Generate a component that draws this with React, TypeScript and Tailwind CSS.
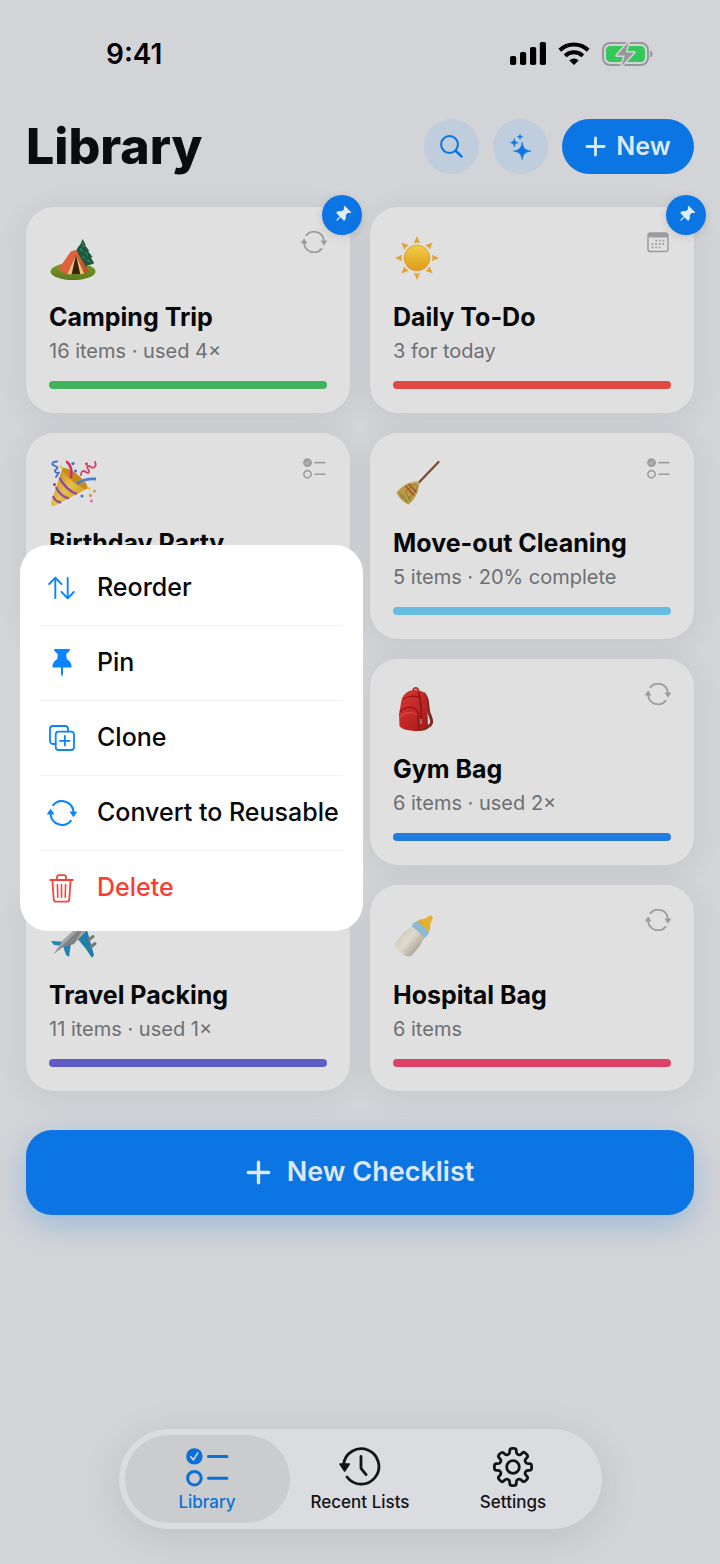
import React from 'react';

type IconProps = { className?: string };
type Kind = 'reusable' | 'daily' | 'checklist';

interface Checklist {
  title: string;
  detail: string;
  bar: string;
  kind: Kind;
  art: React.ReactNode;
  pinned?: boolean;
  menuOpen?: boolean;
}

/* ---------- icons ---------- */

const CycleIcon = ({ className }: IconProps) => (
  <svg className={className} viewBox="0 1 26 22" fill="none" aria-hidden="true">
    <path d="M5.4 5.2A10 10 0 0 1 22.9 10.5M3.100 13.5a10 10 0 0 0 17.500 5.300" stroke="currentColor" strokeWidth="1.8" strokeLinecap="round" />
    <path d="M20.3 10.6h5.2c.5 0 .6.4.4.7l-2.500 3.8c-.3.4-.7.4-1 0l-2.500-3.8c-.2-.3-.1-.7.4-.7ZM5.700 13.4H.5c-.5 0-.6-.4-.4-.7l2.500-3.800c.3-.4.7-.4 1 0l2.500 3.800c.2.3.1.7-.4.7Z" fill="currentColor" />
  </svg>
);

const ChecklistIcon = ({ className }: IconProps) => (
  <svg className={className} viewBox="0 0 43 39" fill="none" stroke="currentColor" strokeWidth="3" strokeLinecap="round" aria-hidden="true">
    <circle cx="8.4" cy="8.4" r="8.2" fill="currentColor" stroke="none" />
    <path d="m4.8 8.8 2.6 3.1 4.4-7" stroke="#d0d1d3" strokeWidth="1.7" strokeLinejoin="round" />
    <circle cx="8.4" cy="30.2" r="6.8" />
    <path d="M22.5 8.6h18.4M22.5 30.2h18.4" />
  </svg>
);

const CalendarIcon = ({ className }: IconProps) => (
  <svg className={className} viewBox="0 0 22 21" fill="none" aria-hidden="true">
    <rect x="1" y="1" width="20" height="18.6" rx="2.6" stroke="currentColor" strokeWidth="1.5" />
    <path d="M1 5.6V3.4C1 2 2 1 3.4 1h15.2C20 1 21 2 21 3.4v2.2Z" fill="currentColor" />
    <path d="M8.4 8.6h9.4M4.6 12h13.2M4.6 15.4h10" stroke="currentColor" strokeWidth="1.8" strokeDasharray="1.7 1.9" />
  </svg>
);

const PinIcon = ({ className }: IconProps) => (
  <svg className={className} viewBox="0 0 20 28" fill="currentColor" aria-hidden="true">
    <path d="M3 0h14c.8 0 1 .6.8 1.2-.4 1.8-3.3 2.8-3.6 4.3l.6 4.5c2.7 1.5 4.8 4.5 4.8 7.3 0 .8-.5 1.2-1.2 1.2h-7.4v6.6L10 28l-1-2.9v-6.6H1.6c-.7 0-1.2-.4-1.2-1.2 0-2.8 2.1-5.8 4.8-7.3l.6-4.5C5.5 4 2.6 3 2.2 1.2 2 .6 2.2 0 3 0Z" />
  </svg>
);

const SortIcon = ({ className }: IconProps) => (
  <svg className={className} viewBox="0 0 27 24" fill="none" stroke="currentColor" strokeWidth="1.9" strokeLinecap="round" strokeLinejoin="round" aria-hidden="true">
    <path d="M7.3 22V1.8M1.2 8l6.1-6.3L13.4 8M19.7 2v20.2M13.6 16l6.1 6.3 6.1-6.3" />
  </svg>
);

const CloneIcon = ({ className }: IconProps) => (
  <svg className={className} viewBox="0 0 26 26" fill="none" stroke="currentColor" strokeWidth="1.8" strokeLinecap="round" aria-hidden="true">
    <path d="M6.6 19H4a3 3 0 0 1-3-3V4a3 3 0 0 1 3-3h12a3 3 0 0 1 3 3v2.6" />
    <rect x="6.7" y="6.7" width="18.3" height="18.3" rx="3" />
    <path d="M15.9 11v9.600M11 15.900h9.700" />
  </svg>
);

const TrashIcon = ({ className }: IconProps) => (
  <svg className={className} viewBox="0 0 25 29" fill="none" stroke="currentColor" strokeWidth="1.8" strokeLinecap="round" strokeLinejoin="round" aria-hidden="true">
    <path d="M1.2 6h22.600M8 6V3.200C8 2 8.800 1.200 10 1.200h5c1.200 0 2 .8 2 2V6M3.400 6l1.300 19.200c.1 1.600 1 2.500 2.600 2.500h10.400c1.600 0 2.500-.9 2.600-2.500L21.600 6" />
    <path d="m8.400 10.500.4 12.700M12.500 10.500v12.700M16.600 10.500l-.4 12.700" strokeWidth="1.6" />
  </svg>
);

const SearchIcon = ({ className }: IconProps) => (
  <svg className={className} viewBox="0 0 23 23" fill="none" stroke="currentColor" strokeLinecap="round" aria-hidden="true">
    <circle cx="9.5" cy="9.5" r="8.4" strokeWidth="2" />
    <path d="m15.8 15.8 5.600 5.600" strokeWidth="2.6" />
  </svg>
);

const SparklesIcon = ({ className }: IconProps) => (
  <svg className={className} viewBox="0 0 22 26" fill="currentColor" stroke="currentColor" strokeWidth=".6" strokeLinejoin="round" aria-hidden="true">
    <path d="M12.2 8.200c.9 5.800 2.600 7.800 8.800 8.900-6.200 1-7.900 3-8.800 8.700-.9-5.700-2.600-7.700-8.800-8.700 6.200-1.100 7.900-3.100 8.800-8.900Z" />
    <path d="M4.300 4.400c.5 2.900 1.200 3.600 4.100 4.200-2.900.5-3.600 1.300-4.100 4.200C3.800 9.900 3.100 9.100.3 8.600 3.100 8 3.800 7.300 4.300 4.400Z" />
    <path d="M10 .2c.3 1.800.8 2.300 2.700 2.600C10.800 3.100 10.300 3.600 10 5.400 9.700 3.600 9.200 3.100 7.300 2.800 9.200 2.500 9.700 2 10 .2Z" />
  </svg>
);

const PlusIcon = ({ className }: IconProps) => (
  <svg className={className} viewBox="0 0 22 22" fill="none" stroke="currentColor" strokeWidth="3" strokeLinecap="round" aria-hidden="true">
    <path d="M11 2v18M2 11h18" />
  </svg>
);

const HistoryIcon = ({ className }: IconProps) => (
  <svg className={className} viewBox="0 0 42 40" fill="none" aria-hidden="true">
    <path d="M4.600 17.500A17.700 17.700 0 1 1 8 30M22 9.500v11.200c0 .5.1.9.4 1.300l4.600 5.600" stroke="currentColor" strokeWidth="2.8" strokeLinecap="round" />
    <path d="M1.200 16.300h8.900c.9 0 1.200.7.7 1.400l-4.300 6.500c-.5.7-1.200.7-1.700 0L.5 17.700c-.5-.7-.2-1.400.7-1.400Z" fill="currentColor" />
  </svg>
);

// eight teeth, corners softened with quadratic curves
const gearPath = (() => {
  const pts: [number, number][] = [];
  for (let i = 0; i < 8; i++) {
    for (const [offset, r] of [[-14, 13.6], [-10, 18.9], [10, 18.9], [14, 13.6]]) {
      const a = ((i * 45 + offset) * Math.PI) / 180;
      pts.push([Math.cos(a) * r, Math.sin(a) * r]);
    }
  }
  const mid = (a: [number, number], b: [number, number], t: number) =>
    `${(a[0] + (b[0] - a[0]) * t).toFixed(2)} ${(a[1] + (b[1] - a[1]) * t).toFixed(2)}`;
  return (
    pts
      .map((p, i) => {
        const prev = pts[(i + pts.length - 1) % pts.length];
        const next = pts[(i + 1) % pts.length];
        return `${i ? 'L' : 'M'}${mid(p, prev, 0.4)}Q${p[0].toFixed(2)} ${p[1].toFixed(2)} ${mid(p, next, 0.4)}`;
      })
      .join('') + 'Z'
  );
})();

const GearIcon = ({ className }: IconProps) => (
  <svg className={className} viewBox="-21 -21 42 42" fill="none" stroke="currentColor" strokeWidth="2.8" strokeLinejoin="round" aria-hidden="true">
    <path d={gearPath} />
    <circle r="6.3" />
  </svg>
);

const SignalIcon = ({ className }: IconProps) => (
  <svg className={className} viewBox="0 0 36 23" fill="currentColor" aria-hidden="true">
    <rect x="0" y="14" width="6.2" height="9" rx="1.8" />
    <rect x="10" y="10" width="6.2" height="13" rx="1.8" />
    <rect x="20" y="5" width="6.2" height="18" rx="1.8" />
    <rect x="29.8" y="0" width="6.2" height="23" rx="1.8" />
  </svg>
);

const WifiIcon = ({ className }: IconProps) => (
  <svg className={className} viewBox="0 0 32 23" fill="none" stroke="currentColor" strokeWidth="4" aria-hidden="true">
    <path d="M1.800 8.300a20.300 20.300 0 0 1 28.400 0" />
    <path d="M7.200 13.900a12.600 12.600 0 0 1 17.600 0" />
    <path d="M16 23l-4.700-4.600a6.700 6.700 0 0 1 9.400 0Z" fill="currentColor" stroke="none" />
  </svg>
);

const BatteryIcon = ({ className }: IconProps) => (
  <svg className={className} viewBox="0 0 51 26" aria-hidden="true">
    <rect x="1" y="2" width="45" height="22" rx="7" fill="none" stroke="#97989b" strokeWidth="2" />
    <rect x="4" y="5" width="39" height="16" rx="4.5" fill="#34c759" />
    <path d="M48 9.500c3.400 1 3.400 6 0 7Z" fill="#97989b" />
    <path d="M26.500 1 14.800 14.600h8L19.500 25 32 11.400h-8.200Z" fill="#97989b" stroke="#d3d4d7" strokeWidth="3" strokeLinejoin="round" paintOrder="stroke" />
  </svg>
);

/* ---------- checklist art ---------- */

const art = 'size-[48px]';

const Tent = (
  <svg className={art} viewBox="0 0 48 48" aria-hidden="true">
    <defs>
      <linearGradient id="grass" x1="0" y1="0" x2="0" y2="1">
        <stop offset="0" stopColor="#7d9a2b" />
        <stop offset="1" stopColor="#5b7a1c" />
      </linearGradient>
      <linearGradient id="canvas" x1="0" y1="0" x2="1" y2="1">
        <stop offset="0" stopColor="#e8764a" />
        <stop offset="1" stopColor="#c9442a" />
      </linearGradient>
    </defs>
    <ellipse cx="24" cy="37.5" rx="22.5" ry="8.6" fill="url(#grass)" />
    <path d="M35 28h2.600v6H35Z" fill="#5c3d22" />
    <path d="m33.500 5 3.400 6-1 .3 4.400 5.400-1.300.4 4.600 6-1.700.4 3.300 5.800c-4 2.300-9 2.300-13 1l-5-13.600 1.600-3.200 2.700-3.200Z" fill="#1c5a3e" />
    <path d="m33.500 9 1.300 4m-3.300 2 2 2m3 1 2 3m-5 2 3 1m2 2 3 2" stroke="#3f8862" strokeWidth="1.1" strokeLinecap="round" />
    <path d="m27 16 12.500 21.500-7.300 2.500L27 22.500l-9 18L9.500 35.500 22 17.500Z" fill="url(#canvas)" />
    <path d="M22 17.500 9.500 35.500l8.500 5L27 16Z" fill="#e0603c" />
    <path d="M27 21 18 40.300l17.300-.5Z" fill="#3b2014" />
    <path d="M27 21 18 40.300l4.500.2ZM27 21l8.300 18.800-4 .5Z" fill="#ecc47c" />
  </svg>
);

const Sun = (
  <svg className={art} viewBox="-24 -24 48 48" aria-hidden="true">
    <defs>
      <linearGradient id="sun" x1="0" y1="0" x2="0" y2="1">
        <stop offset="0" stopColor="#f0cf45" />
        <stop offset="1" stopColor="#e09a1c" />
      </linearGradient>
    </defs>
    {[0, 45, 90, 135, 180, 225, 270, 315].map((a) => (
      <path key={a} d="M-3.200-14.800 0-22 3.200-14.800Q0-16.200-3.200-14.800Z" fill="#e2a430" transform={`rotate(${a})`} />
    ))}
    <circle r="12.8" fill="url(#sun)" stroke="#d38d1c" strokeWidth=".7" />
  </svg>
);

const Party = (
  <svg className={art} viewBox="0 0 48 48" aria-hidden="true">
    <defs>
      <linearGradient id="cone" x1="0" y1="0" x2="1" y2="1">
        <stop offset="0" stopColor="#b98418" />
        <stop offset=".5" stopColor="#e6bf46" />
        <stop offset="1" stopColor="#c0871c" />
      </linearGradient>
    </defs>
    <path d="M13.500 8C18 7 38 22 38.500 28.500L6 45.500c-2.500 1-4.500 0-4-2.500Z" fill="url(#cone)" />
    <path d="M13.500 8C20 6 40 22 38.500 28.500 35 32 12 14 13.500 8Z" fill="#c68b1b" />
    <path d="M10.500 17.500C14 25 21 32 28 34M7 27c2 5 7 10 13 11.500M4 36c1 3 4 6 8 6.500" fill="none" stroke="#8b4aa5" strokeWidth="2.3" />
    <path d="M18 2c5 4 5 9 4 15" fill="none" stroke="#cc3358" strokeWidth="2.6" strokeLinecap="round" />
    <path d="M28 23.500c6-4 12-5 19-4.500" fill="none" stroke="#4a7fcf" strokeWidth="2.8" />
    <path d="M8 1.500c-5 0-6 3-3 4s5 2 2 4 1 4 3 3M9 14l-2 3" fill="none" stroke="#3d6ec4" strokeWidth="1.8" strokeLinecap="round" />
    <path d="M46 2c2 4-1 7-4 5s-5-1-3 2 1 5-2 3-5-1-5 3" fill="none" stroke="#cf4368" strokeWidth="1.8" strokeLinecap="round" />
    <circle cx="24" cy="3.5" r="1.6" fill="#3d6ec4" />
    <circle cx="26.5" cy="11" r="1.5" fill="#3d6ec4" />
    <circle cx="37.5" cy="4" r="1.4" fill="#cc3358" />
    <circle cx="5.5" cy="24.5" r="1.5" fill="#cc3358" />
    <circle cx="12" cy="7" r="1.4" fill="#e2c648" />
    <circle cx="40.5" cy="28.5" r="1.5" fill="#e2c648" />
    <circle cx="45.5" cy="31" r="1.5" fill="#d79b45" />
    <circle cx="41.5" cy="35.5" r="1.6" fill="#d7933d" />
    <circle cx="33" cy="36" r="1.5" fill="#3d6ec4" />
    <circle cx="42.5" cy="41" r="1.6" fill="#cf7ab2" />
  </svg>
);

const Broom = (
  <svg className={art} viewBox="0 0 48 48" aria-hidden="true">
    <path d="M45.500 2 24 24.500" stroke="#7b4a2c" strokeWidth="2.3" strokeLinecap="round" />
    <path d="M22 22c1.500.4 3.500 1.500 3.600 3 .2 7-4 14.500-10 19.500C11 43 6 38 3.500 32.500 9 26 16 22 22 22Z" fill="#b99a45" />
    <path d="m9 34 5 8M6.500 33.500l3 5M12.500 32l4.500 8M24 23c-4 2-8 5-11 9M25 25c-2 5-5 9-9 13" fill="none" stroke="#8e7230" strokeWidth="1" strokeLinecap="round" />
    <path d="m12.500 26 8.500 9.500M15.500 24l8 8.500" stroke="#a0532f" strokeWidth="1.6" />
    <path d="M20 22.500c3-1.500 5-.5 5.900 2" fill="none" stroke="#d2b765" strokeWidth="2" />
  </svg>
);

const Backpack = (
  <svg className={art} viewBox="0 0 48 48" aria-hidden="true">
    <defs>
      <linearGradient id="bag" x1="0" y1="0" x2="1" y2="1">
        <stop offset="0" stopColor="#dc3934" />
        <stop offset="1" stopColor="#a81519" />
      </linearGradient>
    </defs>
    <path d="M30 7c6 4 4 14 6 20 2 5 4 8 2 11s-5 4-8 5" fill="none" stroke="#7c2a1e" strokeWidth="3" />
    <path d="M20 5c0-4 5-4 5.500 0" fill="none" stroke="#b03528" strokeWidth="1.8" />
    <path d="M8 17C9 8 15 4 22 4c8 0 12 4 12 12l1 24c-1 4-7 5-13 5-7-.5-13-1.500-15.500-5L6 28Z" fill="url(#bag)" />
    <path d="M7 26c5-6 16-7 18 1l1 17M10 13c5-3 12-4 17-1" fill="none" stroke="#8d1216" strokeWidth="1.2" />
    <path d="M25 6c4 7 3 20 3 28" fill="none" stroke="#74151a" strokeWidth="1.3" />
    <path d="M7 31c5-5 12-6 17-2" fill="none" stroke="#d94a40" strokeWidth="1.2" />
    <path d="M28 33v5" stroke="#8c7772" strokeWidth="2" />
    <path d="M24 44c5 0 9-1 11-3" fill="none" stroke="#76331d" strokeWidth="2" />
  </svg>
);

const Plane = (
  <svg className={art} viewBox="0 0 48 48" aria-hidden="true">
    <path d="M19 30 2 29l3 4 9 1 3 9 3 2 2-14Z" fill="#1f86b4" />
    <path d="m27 25 11-7 7 25-2 3-6-9Z" fill="#207fa9" />
    <path d="m26 14-23-2 3-4 26 2Z" fill="#1f86b4" />
    <path d="M4.500 42 14 28 36 8c4-4 9-5 10-4s0 6-4 10L25 32 14 34Z" fill="#a3a4a5" />
    <path d="M4.500 42 16 31l22-21-13 22-11 3Z" fill="#7f8184" />
    <path d="m40 27.500 4-3M42.500 34.500l3.500-3" stroke="#77787b" strokeWidth="3" strokeLinecap="round" />
  </svg>
);

const Bottle = (
  <svg className={art} viewBox="0 0 48 48" aria-hidden="true">
    <defs>
      <linearGradient id="milk" x1="0" y1="0" x2="1" y2="0">
        <stop offset="0" stopColor="#d2cdbf" />
        <stop offset=".4" stopColor="#e0dbcf" />
        <stop offset="1" stopColor="#b0aa99" />
      </linearGradient>
    </defs>
    <g transform="translate(19 27) rotate(41)">
      <path d="M-7-14c-1-4-.5-6 1.500-7.500C-4-23-3-24.500-2.600-28c.5-3 4.700-3 5.200 0 .4 3.500 1.400 5 2.900 6.500 2 1.500 2.500 3.500 1.500 7.500Z" fill="#e4b02b" />
      <path d="M-8-17H8c1.500 3 1.500 5 .5 8h-17c-1-3-1-5 .5-8Z" fill="#8db9d1" />
      <path d="M-8.500-9.500h17C8.500-5 10.500-3 10.500 2v9c0 5-3 6.500-10.500 6.500s-10.500-1.500-10.500-6.500V2c0-5 2-7 2-11.500Z" fill="url(#milk)" />
    </g>
  </svg>
);

/* ---------- data ---------- */

const lists: (Checklist | null)[] = [
  { title: 'Camping Trip', detail: '16 items · used 4×', bar: 'bg-[#41b35d]', kind: 'reusable', art: Tent, pinned: true },
  { title: 'Daily To-Do', detail: '3 for today', bar: 'bg-[#df4b43]', kind: 'daily', art: Sun, pinned: true },
  { title: 'Birthday Party', detail: '', bar: 'bg-[#df8b2f]', kind: 'checklist', art: Party, menuOpen: true },
  { title: 'Move-out Cleaning', detail: '5 items · 20% complete', bar: 'bg-[#65bce0]', kind: 'checklist', art: Broom },
  null,
  { title: 'Gym Bag', detail: '6 items · used 2×', bar: 'bg-[#227ce0]', kind: 'reusable', art: Backpack },
  { title: 'Travel Packing', detail: '11 items · used 1×', bar: 'bg-[#5f5cc6]', kind: 'reusable', art: Plane },
  { title: 'Hospital Bag', detail: '6 items', bar: 'bg-[#de4068]', kind: 'reusable', art: Bottle },
];

const actions = [
  { label: 'Reorder', icon: <SortIcon className="w-[27px] h-[24px]" /> },
  { label: 'Pin', icon: <PinIcon className="w-[20px] h-[28px]" /> },
  { label: 'Clone', icon: <CloneIcon className="size-[26px]" /> },
  { label: 'Convert to Reusable', icon: <CycleIcon className="w-[30px] h-[26px]" /> },
  { label: 'Delete', icon: <TrashIcon className="w-[25px] h-[29px]" />, danger: true },
];

const tabs = [
  { label: 'Library', icon: <ChecklistIcon className="w-[43px] h-[39px]" />, active: true },
  { label: 'Recent Lists', icon: <HistoryIcon className="w-[42px] h-[40px]" /> },
  { label: 'Settings', icon: <GearIcon className="size-[42px]" /> },
];

const kindIcon: Record<Kind, React.ReactNode> = {
  reusable: <CycleIcon className="w-[26px] h-[22px]" />,
  daily: <CalendarIcon className="w-[22px] h-[21px]" />,
  checklist: <ChecklistIcon className="w-[23px] h-[21px]" />,
};

/* ---------- components ---------- */

function ContextMenu() {
  return (
    <div role="menu" className="absolute top-[112px] -left-[6px] z-20 w-[343px] rounded-[28px] bg-white px-5 py-[6px]">
      {actions.map((action) => (
        <button
          key={action.label}
          type="button"
          role="menuitem"
          className={`flex h-[75px] w-full items-center gap-5 border-b border-[#f3f3f4] text-left text-[25px] font-medium whitespace-nowrap last:h-[74px] last:border-b-0 ${
            action.danger ? 'text-[#ff3b30]' : 'text-[#060708]'
          }`}
        >
          <span className={`ml-[6px] flex w-[31px] shrink-0 justify-center ${action.danger ? 'text-[#f5443b]' : 'text-[#0a84ff]'}`}>
            {action.icon}
          </span>
          {action.label}
        </button>
      ))}
    </div>
  );
}

function ChecklistCard({ list }: { list: Checklist }) {
  return (
    <article className="relative h-[206px] rounded-[28px] bg-[#e0e0e0] px-[23px] pt-6 shadow-[0_4px_28px_rgba(60,70,90,0.09)]">
      <div className="flex h-[54px] items-center justify-between">
        {list.art}
        <span className="flex h-[22px] w-[26px] items-center justify-center self-start text-[#9b9c9d]">{kindIcon[list.kind]}</span>
      </div>
      <h2 className="mt-4 text-[25px] leading-8 font-bold whitespace-nowrap text-[#060708]">{list.title}</h2>
      <p className="mt-1 h-7 text-[20px] leading-7 whitespace-nowrap text-[#6d6f73]">{list.detail}</p>
      <div className={`mt-4 h-2 rounded-full ${list.bar}`} />
      {list.pinned && (
        <span className="absolute -top-3 -right-3 flex size-10 items-center justify-center rounded-full bg-[#0a75e3] text-[#e0ecf8] shadow-[0_2px_8px_rgba(0,0,0,0.12)]">
          <PinIcon className="h-[18px] w-[12px] rotate-45" />
        </span>
      )}
      {list.menuOpen && <ContextMenu />}
    </article>
  );
}

export default function App() {
  return (
    <div className="flex min-h-screen flex-col bg-[#d3d4d7] font-['Inter','Liberation_Sans',sans-serif]">
      <div className="flex h-[107px] items-center justify-between pr-[67px] pl-[106px] text-black">
        <time className="text-[28px] leading-8 font-semibold">9:41</time>
        <div className="flex items-center gap-3">
          <SignalIcon className="h-[23px] w-[36px]" />
          <WifiIcon className="h-[23px] w-[32px]" />
          <BatteryIcon className="h-[26px] w-[51px]" />
        </div>
      </div>

      <header className="flex items-center justify-between px-[26px] pt-3">
        <h1 className="text-[50px] leading-[55px] font-extrabold text-[#0b0c0e]">Library</h1>
        <div className="flex gap-[14px]">
          <button type="button" aria-label="Search" className="flex size-[55px] items-center justify-center rounded-full bg-[#c0cddc] text-[#0a75e3]">
            <SearchIcon className="size-[23px]" />
          </button>
          <button type="button" aria-label="Suggestions" className="flex size-[55px] items-center justify-center rounded-full bg-[#c0cddc] text-[#0a75e3]">
            <SparklesIcon className="h-[26px] w-[22px]" />
          </button>
          <button type="button" className="flex h-[55px] w-[132px] items-center justify-center gap-[10px] rounded-full bg-[#0a75e3] text-[25px] font-semibold text-[#dce8f5]">
            <PlusIcon className="size-[21px]" />
            New
          </button>
        </div>
      </header>

      <main className="px-[26px] pt-[33px]">
        <div className="grid grid-cols-2 gap-5">
          {lists.map((list, i) =>
            list ? <ChecklistCard key={list.title} list={list} /> : <div key={i} className="rounded-[28px] bg-[#e0e0e0]" />
          )}
        </div>
        <button
          type="button"
          className="mt-[39px] flex h-[85px] w-full items-center justify-center gap-4 rounded-[26px] bg-[#0a75e3] text-[27px] font-semibold text-[#dce8f5] shadow-[0_10px_30px_rgba(10,117,227,0.28)]"
        >
          <PlusIcon className="size-[25px]" />
          New Checklist
        </button>
      </main>

      <nav className="mx-auto mt-auto mb-[35px] flex -space-x-3 rounded-full bg-[#dbdce0] p-[6px] shadow-[0_8px_40px_rgba(0,0,0,0.1)]">
        {tabs.map((tab) => (
          <a
            key={tab.label}
            href="#"
            aria-current={tab.active ? 'page' : undefined}
            className={`flex h-[88px] w-[165px] flex-col items-center rounded-full pt-[11px] text-[17px] leading-5 font-medium ${
              tab.active ? 'bg-[#cbccce] text-[#0a70d8]' : 'text-[#121316]'
            }`}
          >
            <span className="flex h-[42px] items-center">{tab.icon}</span>
            <span className="mt-1">{tab.label}</span>
          </a>
        ))}
      </nav>
    </div>
  );
}
